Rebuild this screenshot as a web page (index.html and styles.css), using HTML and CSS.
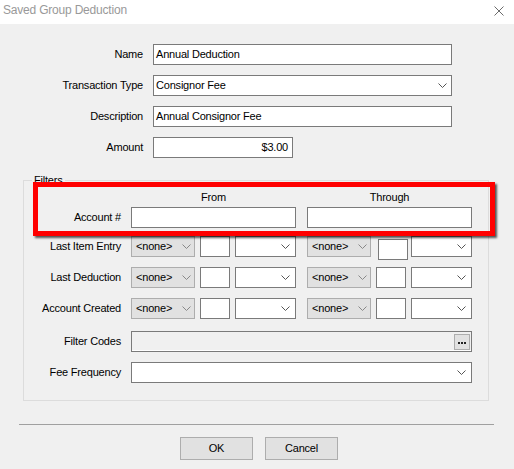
FILE: index.html
```html
<!DOCTYPE html>
<html>
<head>
<meta charset="utf-8">
<link rel="stylesheet" href="styles.css">
</head>
<body>
<div class="window">
  <div class="titlebar">
    <span class="title">Saved Group Deduction</span>
    <svg class="close" width="10" height="10" viewBox="0 0 10 10"><path d="M0.5 0.5 L9.5 9.5 M9.5 0.5 L0.5 9.5" stroke="#6b6b6b" stroke-width="1" fill="none"/></svg>
  </div>
  <div class="content">
    <div class="main">
      <div class="row"><span class="lbl">Name</span><div class="field wide">Annual Deduction</div></div>
      <div class="row"><span class="lbl">Transaction Type</span><div class="field wide select"><span>Consignor Fee</span><svg class="chev" width="9" height="5" viewBox="0 0 9 5"><path d="M0.5 0.5 L4.5 4.5 L8.5 0.5" stroke="#555" fill="none"/></svg></div></div>
      <div class="row"><span class="lbl">Description</span><div class="field wide">Annual Consignor Fee</div></div>
      <div class="row"><span class="lbl">Amount</span><div class="field amount">$3.00</div></div>
    </div>

    <fieldset class="filters">
      <legend>Filters</legend>
      <div class="fhead"><span class="col">From</span><span class="col col2">Through</span></div>
      <div class="frow r-acct"><span class="flbl">Account #</span><div class="box long"></div><div class="box long g2"></div></div>
      <div class="frow r-lie">
        <span class="flbl">Last Item Entry</span>
        <div class="combo"><span>&lt;none&gt;</span><svg width="9" height="5" viewBox="0 0 9 5"><path d="M0.5 0.5 L4.5 4.5 L8.5 0.5" stroke="#888" fill="none"/></svg></div>
        <div class="box num"></div>
        <div class="box dd"><svg width="9" height="5" viewBox="0 0 9 5"><path d="M0.5 0.5 L4.5 4.5 L8.5 0.5" stroke="#555" fill="none"/></svg></div>
        <div class="combo g2"><span>&lt;none&gt;</span><svg width="9" height="5" viewBox="0 0 9 5"><path d="M0.5 0.5 L4.5 4.5 L8.5 0.5" stroke="#888" fill="none"/></svg></div>
        <div class="box num shifted"></div>
        <div class="box dd"><svg width="9" height="5" viewBox="0 0 9 5"><path d="M0.5 0.5 L4.5 4.5 L8.5 0.5" stroke="#555" fill="none"/></svg></div>
      </div>
      <div class="frow r-ld">
        <span class="flbl">Last Deduction</span>
        <div class="combo"><span>&lt;none&gt;</span><svg width="9" height="5" viewBox="0 0 9 5"><path d="M0.5 0.5 L4.5 4.5 L8.5 0.5" stroke="#888" fill="none"/></svg></div>
        <div class="box num"></div>
        <div class="box dd"><svg width="9" height="5" viewBox="0 0 9 5"><path d="M0.5 0.5 L4.5 4.5 L8.5 0.5" stroke="#555" fill="none"/></svg></div>
        <div class="combo g2"><span>&lt;none&gt;</span><svg width="9" height="5" viewBox="0 0 9 5"><path d="M0.5 0.5 L4.5 4.5 L8.5 0.5" stroke="#888" fill="none"/></svg></div>
        <div class="box num"></div>
        <div class="box dd"><svg width="9" height="5" viewBox="0 0 9 5"><path d="M0.5 0.5 L4.5 4.5 L8.5 0.5" stroke="#555" fill="none"/></svg></div>
      </div>
      <div class="frow r-ac">
        <span class="flbl">Account Created</span>
        <div class="combo"><span>&lt;none&gt;</span><svg width="9" height="5" viewBox="0 0 9 5"><path d="M0.5 0.5 L4.5 4.5 L8.5 0.5" stroke="#888" fill="none"/></svg></div>
        <div class="box num"></div>
        <div class="box dd"><svg width="9" height="5" viewBox="0 0 9 5"><path d="M0.5 0.5 L4.5 4.5 L8.5 0.5" stroke="#555" fill="none"/></svg></div>
        <div class="combo g2"><span>&lt;none&gt;</span><svg width="9" height="5" viewBox="0 0 9 5"><path d="M0.5 0.5 L4.5 4.5 L8.5 0.5" stroke="#888" fill="none"/></svg></div>
        <div class="box num"></div>
        <div class="box dd"><svg width="9" height="5" viewBox="0 0 9 5"><path d="M0.5 0.5 L4.5 4.5 L8.5 0.5" stroke="#555" fill="none"/></svg></div>
      </div>
      <div class="frow r-fc">
        <span class="flbl">Filter Codes</span>
        <div class="box full codes"><div class="ellipsis"><svg width="14" height="14" viewBox="0 0 14 14"><rect x="3" y="7" width="2" height="2" fill="#222"/><rect x="6" y="7" width="2" height="2" fill="#222"/><rect x="9" y="7" width="2" height="2" fill="#222"/></svg></div></div>
      </div>
      <div class="frow r-ff">
        <span class="flbl">Fee Frequency</span>
        <div class="box full dd"><svg width="9" height="5" viewBox="0 0 9 5"><path d="M0.5 0.5 L4.5 4.5 L8.5 0.5" stroke="#555" fill="none"/></svg></div>
      </div>
    </fieldset>

    <div class="sep"></div>
    <div class="buttons"><div class="btn">OK</div><div class="btn">Cancel</div></div>

    <div class="highlight"></div>
  </div>
</div>
</body>
</html>
```
FILE: styles.css
```css
* { box-sizing: border-box; }
html, body { margin: 0; padding: 0; }
body {
  width: 514px;
  height: 469px;
  overflow: hidden;
  background: #f0f0f0;
  font-family: "Liberation Sans", Arial, sans-serif;
  font-size: 11px;
  line-height: 13px;
  letter-spacing: -0.2px;
  color: #000;
}
.titlebar {
  height: 24px;
  background: #fff;
  display: flex;
  align-items: flex-start;
  justify-content: space-between;
  padding: 4px 10px 0 3px;
}
.title { font-size: 12px; color: #999; }
.close { margin-top: 2px; }
.content { position: relative; }

.main {
  padding-top: 20px;
  display: flex;
  flex-direction: column;
  gap: 10px;
}
.row { display: flex; align-items: center; height: 21px; }
.lbl { width: 143px; text-align: right; margin-right: 10px; flex: none; }
.field {
  height: 21px;
  border: 1px solid #7a7a7a;
  background: #fff;
  display: flex;
  align-items: center;
  padding: 0 2px;
}
.wide { width: 299px; }
.select { justify-content: space-between; padding-right: 4px; }
.amount { width: 140px; justify-content: flex-end; padding-right: 4px; }

.filters {
  margin: 16px 0 0 23px;
  padding: 0 0 17px 0;
  width: 466px;
  border: 1px solid #dcdcdc;
  min-inline-size: 0;
}
.filters legend {
  margin-left: 8px;
  padding: 0 2px;
  line-height: 13px;
}
.fhead { display: flex; padding-left: 107px; margin-top: 4px; height: 13px; }
.col { width: 165px; text-align: center; }
.col2 { margin-left: 11px; }
.frow { display: flex; align-items: center; height: 21px; }
.r-acct { margin-top: 3px; }
.r-lie { margin-top: 8px; }
.r-ld { margin-top: 10px; }
.r-ac { margin-top: 10px; }
.r-fc { margin-top: 12px; }
.r-ff { margin-top: 10px; }
.flbl { width: 97px; text-align: right; margin-right: 10px; flex: none; }

.box {
  height: 21px;
  border: 1px solid #7a7a7a;
  background: #fff;
  flex: none;
}
.long { width: 165px; }
.num { width: 30px; margin-left: 5px; }
.shifted { margin-left: 7px; margin-right: -2px; position: relative; top: 3px; }
.dd {
  width: 61px;
  margin-left: 5px;
  display: flex;
  align-items: center;
  justify-content: flex-end;
  padding-right: 5px;
}
.full { width: 341px; margin-left: 0; }
.g2 { margin-left: 11px; }
.combo {
  width: 64px;
  height: 21px;
  border: 1px solid #adadad;
  background: #e1e1e1;
  display: flex;
  align-items: center;
  justify-content: space-between;
  padding: 0 3px 0 4px;
  flex: none;
}
.codes {
  background: #f0f0f0;
  display: flex;
  align-items: center;
  justify-content: flex-end;
  padding-right: 1px;
  box-shadow: inset 0 -1px 0 #fff;
}
.ellipsis {
  width: 16px;
  height: 16px;
  border: 1px solid #adadad;
  background: #e1e1e1;
}
.ellipsis svg { display: block; }

.sep {
  margin: 23px 20px 0 19px;
  height: 1px;
  background: #a0a0a0;
}
.buttons {
  display: flex;
  gap: 12px;
  padding-left: 180px;
  margin-top: 12px;
}
.btn {
  width: 73px;
  height: 23px;
  border: 1px solid #adadad;
  background: #e1e1e1;
  display: flex;
  align-items: center;
  justify-content: center;
}

.highlight {
  position: absolute;
  left: 33px;
  top: 158px;
  width: 462px;
  height: 54px;
  border: 5px solid #ff0000;
  box-shadow: 2px 2px 2px rgba(0, 0, 0, 0.65);
}
```
